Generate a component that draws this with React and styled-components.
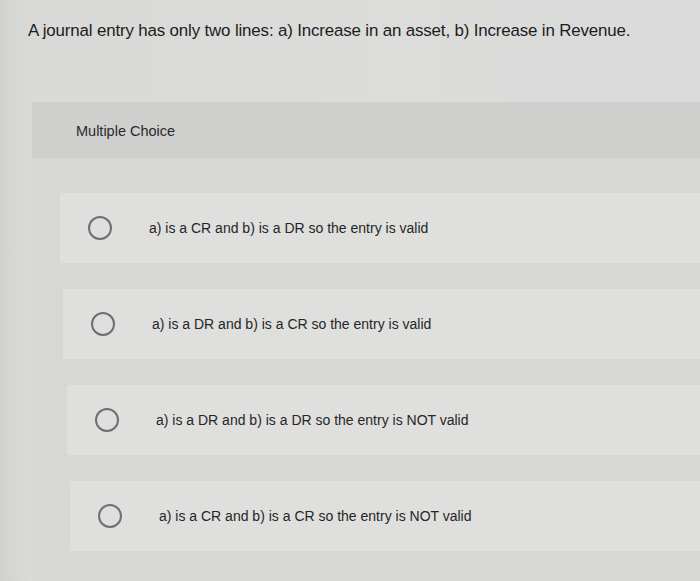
import React from "react";
import styled, { createGlobalStyle } from "styled-components";

const Global = createGlobalStyle`
  html, body { margin: 0; padding: 0; }
  body {
    background: #d9d9d8;
    font-family: "Liberation Sans", Arial, sans-serif;
    color: #2a2a2a;
    width: 700px;
    height: 581px;
    overflow: hidden;
  }
`;

const Page = styled.div`
  display: flex;
  flex-direction: column;
  height: 581px;
  background: linear-gradient(90deg, #d2d2d1 0px, #d9d9d8 30px, #dcdcdb 400px, #dadada 700px);
`;

const Title = styled.h1`
  margin: 0;
  padding: 21px 0 0 28px;
  height: 102px;
  box-sizing: border-box;
  font-size: 16.9px;
  font-weight: 400;
  color: #1c1c1c;
  letter-spacing: -0.15px;
`;

const Card = styled.section`
  flex: 1;
  margin-left: 32px;
  background: #d7d7d6;
  display: flex;
  flex-direction: column;
`;

const Header = styled.div`
  height: 56px;
  background: #cfcfce;
  display: flex;
  align-items: center;
  padding-left: 44px;
  font-size: 14.5px;
  color: #2a2a2a;
  padding-top: 2px;
  box-sizing: border-box;
`;

const Options = styled.div`
  display: flex;
  flex-direction: column;
  gap: 26px;
  padding-top: 35px;
`;

const Option = styled.label`
  height: 70px;
  margin-left: ${(p) => 28 + p.$shift}px;
  background: #dfdfde;
  display: flex;
  align-items: center;
  padding-left: 28px;
  gap: 37px;
  font-size: 14px;
  color: #262626;
  cursor: pointer;
`;

const Radio = styled.span`
  width: 20px;
  height: 20px;
  border: 2px solid #6f6f6f;
  border-radius: 50%;
  flex: none;
`;

const items = [
  { text: "a) is a CR and b) is a DR so the entry is valid", shift: 0 },
  { text: "a) is a DR and b) is a CR so the entry is valid", shift: 3 },
  { text: "a) is a DR and b) is a DR so the entry is NOT valid", shift: 7 },
  { text: "a) is a CR and b) is a CR so the entry is NOT valid", shift: 10 },
];

export default function App() {
  return (
    <>
      <Global />
      <Page>
        <Title>A journal entry has only two lines: a) Increase in an asset, b) Increase in Revenue.</Title>
        <Card>
          <Header>Multiple Choice</Header>
          <Options>
            {items.map((it) => (
              <Option key={it.text} $shift={it.shift}>
                <Radio />
                {it.text}
              </Option>
            ))}
          </Options>
        </Card>
      </Page>
    </>
  );
}
